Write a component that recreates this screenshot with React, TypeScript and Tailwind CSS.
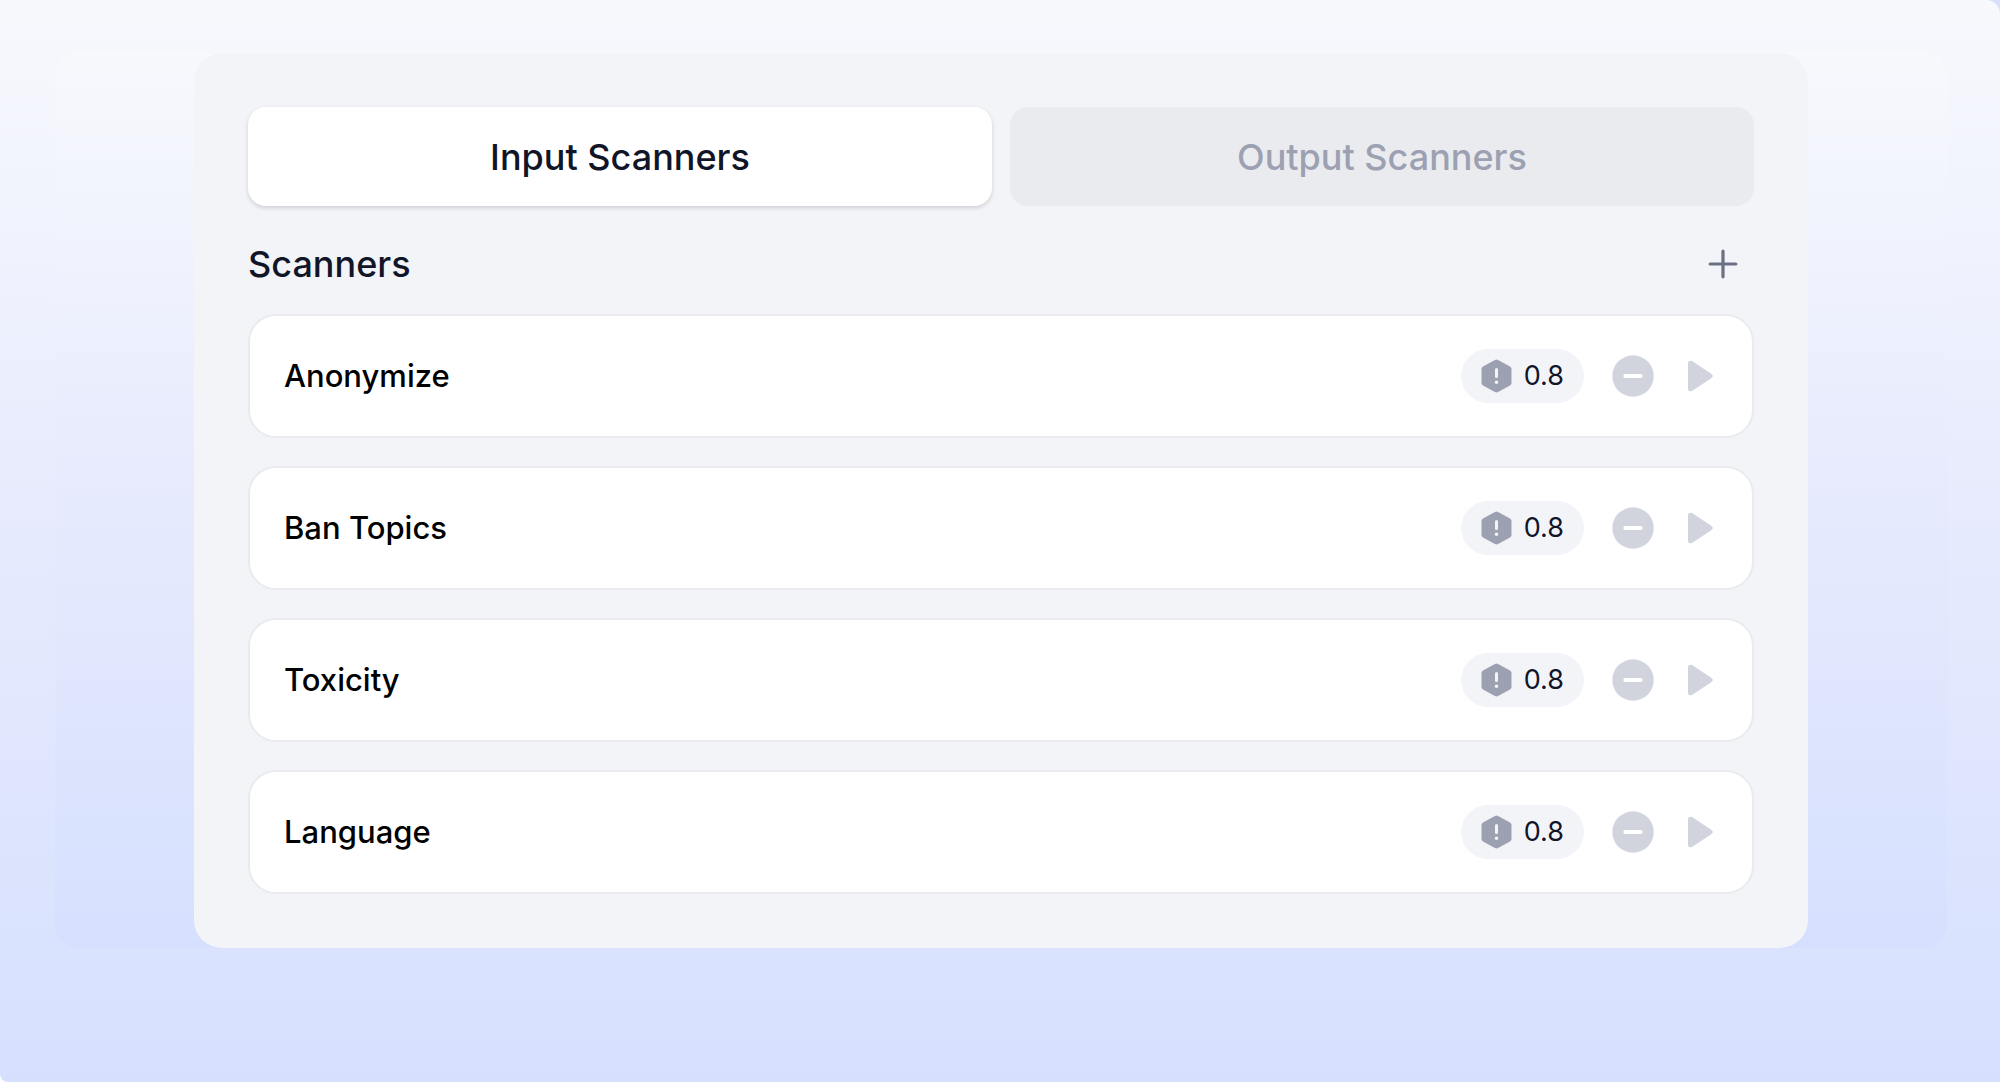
import { useState } from 'react'
import { Plus } from 'lucide-react'

interface Scanner {
  id: number
  name: string
  threshold: number
}

const scanners: Scanner[] = [
  { id: 1, name: 'Anonymize', threshold: 0.8 },
  { id: 2, name: 'Ban Topics', threshold: 0.8 },
  { id: 3, name: 'Toxicity', threshold: 0.8 },
  { id: 4, name: 'Language', threshold: 0.8 }
]

const tabs = ['Input Scanners', 'Output Scanners']

const HexAlertIcon = () => (
  <svg width="31" height="34" viewBox="0 0 31 34" aria-hidden="true">
    <path
      d="M13.9 1 Q15.5 0.1 17.1 1 L29 7.4 Q30.5 8.3 30.5 10 V24 Q30.5 25.7 29 26.6 L17.1 33 Q15.5 33.9 13.9 33 L2 26.6 Q0.5 25.7 0.5 24 V10 Q0.5 8.3 2 7.4 Z"
      fill="#9ca1b2"
    />
    <path d="M15.5 10.5 V17.5" stroke="#f3f4f8" strokeWidth="3" strokeLinecap="round" />
    <circle cx="15.5" cy="23.2" r="1.7" fill="#f3f4f8" />
  </svg>
)

const MinusCircleIcon = () => (
  <svg width="42" height="42" viewBox="0 0 42 42" aria-hidden="true">
    <circle cx="21" cy="21" r="20.7" fill="#d1d4dc" />
    <path d="M13.2 21 H28.8" stroke="#fff" strokeWidth="3.8" strokeLinecap="round" />
  </svg>
)

const PlayIcon = () => (
  <svg width="40" height="42" viewBox="0 0 40 42" aria-hidden="true">
    <path
      d="M6 8.6 Q6 5.8 8.6 5.8 Q9.8 5.8 10.8 6.5 L29.3 18.8 Q30.7 19.8 30.7 21 Q30.7 22.2 29.3 23.2 L10.8 35.5 Q9.8 36.2 8.6 36.2 Q6 36.2 6 33.4 Z"
      fill="#d1d4dc"
    />
  </svg>
)

const ScannerRow = ({ scanner }: { scanner: Scanner }) => {
  return (
    <li className="flex h-[124px] items-center justify-between rounded-[28px] border-2 border-[#eaebef] bg-white pr-[30px] pl-[34px]">
      <span className="text-[31px] leading-10 font-medium text-black">{scanner.name}</span>
      <div className="flex items-center gap-7">
        <span className="flex h-[54px] items-center gap-3 rounded-full bg-[#f3f4f8] px-5 text-[27px] leading-10 text-[#111528]">
          <HexAlertIcon />
          {scanner.threshold}
        </span>
        <button type="button" aria-label={`Remove ${scanner.name}`}>
          <MinusCircleIcon />
        </button>
        <button type="button" aria-label={`Run ${scanner.name}`}>
          <PlayIcon />
        </button>
      </div>
    </li>
  )
}

const App = () => {
  const [activeTab, setActiveTab] = useState(tabs[0])

  return (
    <div className="min-h-screen bg-linear-to-tr from-white to-[#d9defb] font-['Inter',sans-serif]">
      <main className="min-h-screen rounded-tr-[14px] rounded-bl-[8px] bg-linear-to-b from-[#f8f9fd] via-[#e6eafd] to-[#d6e0fe] pt-[53px] pr-[53px] pl-[55px]">
        <div className="rounded-[24px] bg-linear-to-b from-[#f8f9fd] via-[#e6eafd] to-[#d6e0fe] px-[139px]">
          <section className="rounded-[28px] bg-[#f3f4f8] p-[54px]">
            <div className="grid grid-cols-2 gap-[18px]" role="tablist">
              {tabs.map((tab) => (
                <button
                  key={tab}
                  type="button"
                  role="tab"
                  aria-selected={tab === activeTab}
                  onClick={() => setActiveTab(tab)}
                  className={
                    tab === activeTab
                      ? 'h-[99px] rounded-[18px] bg-white text-[36px] font-medium text-[#111528] shadow-[0_2px_4px_rgba(17,21,40,0.16)]'
                      : 'h-[99px] rounded-[18px] bg-[#eaebef] text-[36px] font-medium text-[#9ca1b2]'
                  }
                >
                  {tab}
                </button>
              ))}
            </div>

            <div className="mt-[27px] mb-[19px] flex items-center justify-between">
              <h2 className="text-[36px] font-medium text-[#111528]">Scanners</h2>
              <button
                type="button"
                aria-label="Add scanner"
                className="flex size-[62px] items-center justify-center text-[#6b7085]"
              >
                <Plus size={44} strokeWidth={1.75} />
              </button>
            </div>

            <ul className="flex flex-col gap-7">
              {scanners.map((scanner) => (
                <ScannerRow key={scanner.id} scanner={scanner} />
              ))}
            </ul>
          </section>
        </div>
      </main>
    </div>
  )
}

export default App
